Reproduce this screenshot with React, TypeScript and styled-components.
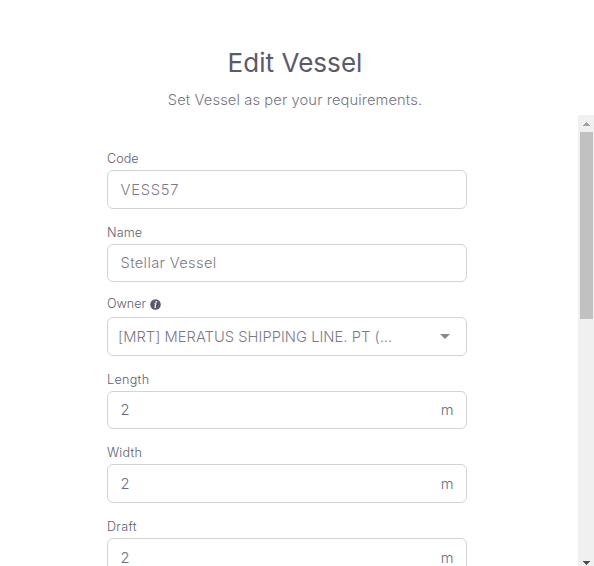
import React from "react";
import styled, { createGlobalStyle } from "styled-components";

const GlobalStyle = createGlobalStyle`
  * { box-sizing: border-box; }
  html, body { margin: 0; background: #fff; overflow: hidden; }
  body { font-family: Inter, "Liberation Sans", sans-serif; font-weight: 350; color: #6f6b7d; }
`;

const Modal = styled.main`
  height: 566px;
  display: flex;
  flex-direction: column;
  overflow: hidden;
`;

const Header = styled.header`
  height: 115px;
  flex: none;
  padding: 45px 4px 0 0;
  display: flex;
  flex-direction: column;
  align-items: center;
`;

const Title = styled.h3`
  margin: 0;
  font-size: 26px;
  line-height: 36px;
  font-weight: 400;
  letter-spacing: 0.05px;
  color: #5d596c;
`;

const Subtitle = styled.p`
  margin: 10px 0 0;
  font-size: 14.7px;
  line-height: 18px;
  letter-spacing: 0.11px;
  white-space: nowrap;
  color: #777383;
`;

const Body = styled.div`
  flex: 1;
  min-height: 0;
  display: flex;
  justify-content: space-between;
`;

const Form = styled.form`
  width: 467px;
  padding: 34px 0 0 107px;
  overflow: hidden;
`;

const Field = styled.div<{ $height: number }>`
  height: ${(p) => p.$height}px;
`;

const Label = styled.label<{ $raised?: boolean; $spacing?: number }>`
  display: flex;
  align-items: center;
  gap: 4px;
  height: ${(p) => (p.$raised ? 20 : 21)}px;
  margin-bottom: ${(p) => (p.$raised ? 1 : 0)}px;
  padding-bottom: ${(p) => (p.$raised ? 4 : 2)}px;
  font-size: 12.6px;
  line-height: 18px;
  letter-spacing: ${(p) => p.$spacing ?? 0}px;
  color: #625e70;
`;

const Control = styled.div<{ $height: number; $select?: boolean }>`
  height: ${(p) => p.$height}px;
  display: flex;
  align-items: center;
  justify-content: space-between;
  padding: 0 12.5px 0 ${(p) => (p.$select ? 10 : 12.5)}px;
  border: 1px solid #d3d2d6;
  border-radius: 6px;
`;

const Value = styled.span<{ $spacing?: number; $strong?: boolean }>`
  font-size: 14.7px;
  line-height: 22px;
  letter-spacing: ${(p) => p.$spacing ?? 0}px;
  white-space: nowrap;
  color: ${(p) => (p.$strong ? "#6f6b7d" : "#7d7988")};
`;

const Caret = styled.svg`
  margin-right: 3.5px;
`;

const Scrollbar = styled.div`
  width: 16px;
  background: #f0f0f0;
  display: flex;
  flex-direction: column;
  align-items: center;
`;

const ScrollButton = styled.div`
  height: 17px;
  width: 16px;
  flex: none;
  display: flex;
`;

const Thumb = styled.div`
  width: 13px;
  height: 187px;
  margin-left: 1px;
  background: #c1c1c1;
`;

const Spacer = styled.div`
  flex: 1;
`;

type FieldData = {
  label: string;
  value: string;
  row: number;
  box: number;
  unit?: string;
  select?: boolean;
  spacing?: number;
  labelSpacing?: number;
};

const fields: FieldData[] = [
  { label: "Code", value: "VESS57", row: 74, box: 39, spacing: 0.75 },
  { label: "Name", value: "Stellar Vessel", row: 73, box: 38, spacing: 0.35, labelSpacing: 0.1 },
  { label: "Owner", value: "[MRT] MERATUS SHIPPING LINE. PT (...", row: 74, box: 39, select: true, spacing: 0.04 },
  { label: "Length", value: "2", row: 73, box: 38, unit: "m", labelSpacing: 0.3 },
  { label: "Width", value: "2", row: 74, box: 39, unit: "m", labelSpacing: 0.2 },
  { label: "Draft", value: "2", row: 74, box: 39, unit: "m", labelSpacing: 0.3 },
];

const InfoIcon = () => (
  <svg width="11" height="11" viewBox="0 0 11 11">
    <circle cx="5.5" cy="5.5" r="5.3" fill="#5d596c" />
    <circle cx="6.2" cy="2.8" r="0.9" fill="#fff" />
    <path d="M4.4 4.7h1.4L5 8.2h1" fill="none" stroke="#fff" strokeWidth="1.1" />
  </svg>
);

export default function App() {
  return (
    <>
      <GlobalStyle />
      <Modal>
        <Header>
          <Title>Edit Vessel</Title>
          <Subtitle>Set Vessel as per your requirements.</Subtitle>
        </Header>
        <Body>
          <Form>
            {fields.map((f) => (
              <Field key={f.label} $height={f.row}>
                <Label $raised={f.select} $spacing={f.labelSpacing}>
                  <span>{f.label}</span>
                  {f.select && <InfoIcon />}
                </Label>
                <Control $height={f.box} $select={f.select}>
                  <Value $spacing={f.spacing} $strong={!!f.unit}>{f.value}</Value>
                  {f.unit && <Value $strong>{f.unit}</Value>}
                  {f.select && (
                    <Caret width="10" height="5" viewBox="0 0 10 5">
                      <path d="M0 0h10L5 5z" fill="#8b8896" />
                    </Caret>
                  )}
                </Control>
              </Field>
            ))}
          </Form>
          <Scrollbar>
            <ScrollButton>
              <svg width="16" height="17" viewBox="0 0 16 17" shapeRendering="crispEdges">
                <path d="M8 7h1v1h1v1h1v1h1v1H5v-1h1V9h1V8h1z" fill="#a3a3a3" />
              </svg>
            </ScrollButton>
            <Thumb />
            <Spacer />
            <ScrollButton>
              <svg width="16" height="17" viewBox="0 0 16 17" shapeRendering="crispEdges">
                <path d="M5 12h7v1h-1v1h-1v1H9v1H8v-1H7v-1H6v-1H5z" fill="#505050" />
              </svg>
            </ScrollButton>
          </Scrollbar>
        </Body>
      </Modal>
    </>
  );
}
